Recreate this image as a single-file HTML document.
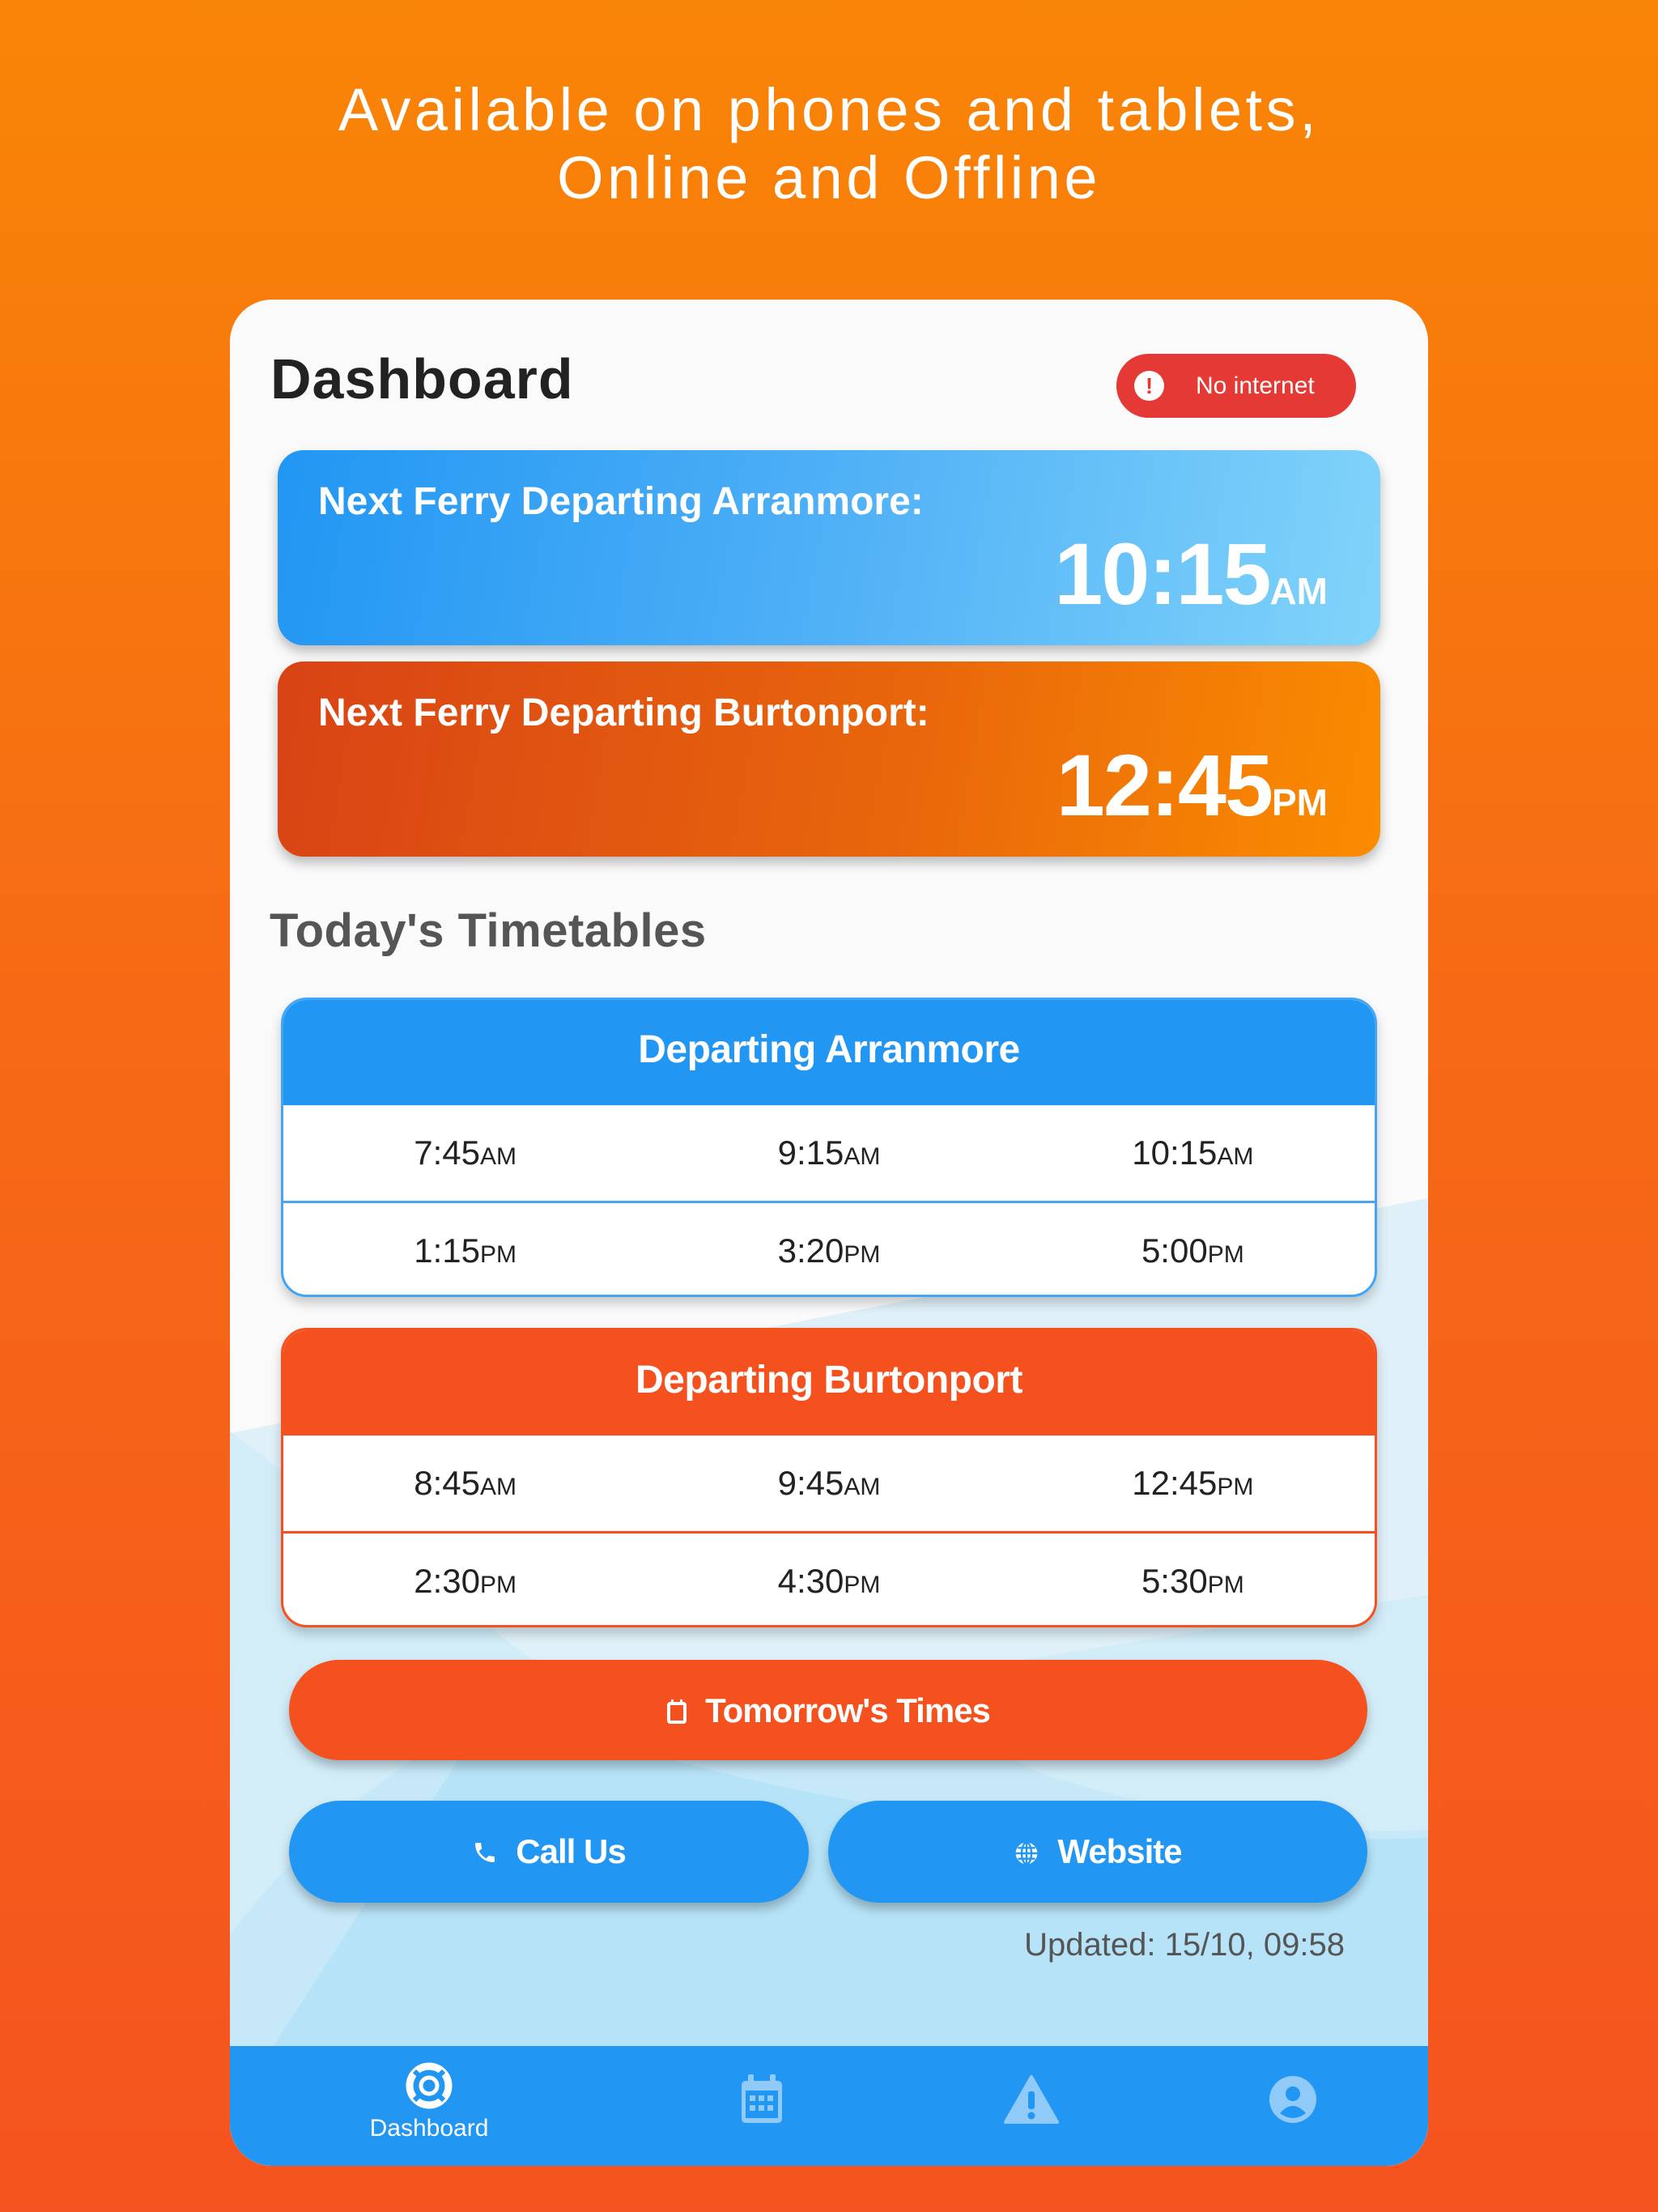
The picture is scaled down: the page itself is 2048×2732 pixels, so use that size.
<!DOCTYPE html>
<html><head><meta charset="utf-8"><style>
*{margin:0;padding:0;box-sizing:border-box}
body{width:2048px;height:2732px;position:relative;overflow:hidden;background:linear-gradient(180deg,#f98506 0%,#f66a15 45%,#f5531f 100%);font-family:"Liberation Sans",sans-serif}
.a{position:absolute}
.hd{left:0;width:2048px;text-align:center;color:#fff;font-size:74px;line-height:84px;letter-spacing:4.5px}
.card{left:284px;top:370px;width:1480px;height:2305px;border-radius:52px;background:#fafafa;overflow:hidden}
.b{font-weight:bold}
.nf{left:343px;width:1362px;height:241px;border-radius:32px;box-shadow:0 8px 14px rgba(0,0,0,.25);color:#fff}
.nf .t{position:absolute;left:50px;top:36px;font-size:48px;font-weight:bold;letter-spacing:0px}
.nf .tm{position:absolute;right:65px;top:90px;font-size:108px;font-weight:bold;letter-spacing:-2px}
.nf .tm span{font-size:46px;letter-spacing:0}
.tb{left:347px;width:1354px;height:370px;border-radius:32px;background:#fff;overflow:hidden;box-shadow:0 8px 14px rgba(0,0,0,.2)}
.tb .h{height:133px;color:#fff;font-size:48px;font-weight:bold;text-align:center;line-height:130px;letter-spacing:-0.5px}
.row{height:118px;display:flex}
.row div{flex:1;text-align:center;line-height:118px;font-size:42px;color:#222}
.row div span{font-size:30px}
.btn{border-radius:64px;color:#fff;font-weight:bold;font-size:42px;text-align:center;line-height:126px;box-shadow:0 8px 12px rgba(0,0,0,.25);letter-spacing:-1px}
</style></head><body>
<div class="a hd" style="top:94px">Available on phones and tablets,</div>
<div class="a hd" style="top:178px">Online and Offline</div>

<div class="a card">
<svg width="1480" height="2305" style="position:absolute;left:0;top:0">
<polygon points="0,1400 1480,1110 1480,2305 0,2305" fill="#dff0f8"/>
<polygon points="0,1398 480,1760 1480,1600 1480,2305 0,2305" fill="#d2ecf8"/>
<path d="M0,2020 Q400,1500 1000,1820 Q1250,1900 1480,1890 L1480,2305 L0,2305Z" fill="#c6e8f8"/>
<path d="M0,2240 L330,1730 Q800,1920 1480,1900 L1480,2305 L0,2305Z" fill="#b6e3f8"/>
<rect x="0" y="2157" width="1480" height="148" fill="#2196f3"/>
</svg>
</div>

<div class="a b" style="left:334px;top:428px;font-size:70px;color:#222;letter-spacing:1px">Dashboard</div>
<div class="a" style="left:1379px;top:437px;width:296px;height:79px;border-radius:40px;background:#e53935;color:#fff;font-size:30px;line-height:79px">
<div class="a" style="left:22px;top:21px;width:37px;height:37px;border-radius:50%;background:#fff;color:#e53935;font-weight:bold;text-align:center;line-height:37px;font-size:28px">!</div>
<span style="position:absolute;left:98px">No internet</span></div>

<div class="a nf" style="top:556px;background:linear-gradient(100deg,#2196f3 0%,#4fb0f6 50%,#81d4fa 100%)"><div class="t">Next Ferry Departing Arranmore:</div><div class="tm">10:15<span>AM</span></div></div>
<div class="a nf" style="top:817px;background:linear-gradient(100deg,#d84315 0%,#e8650c 55%,#fb8c00 100%)"><div class="t">Next Ferry Departing Burtonport:</div><div class="tm">12:45<span>PM</span></div></div>

<div class="a b" style="left:333px;top:1116px;font-size:58px;color:#555;letter-spacing:0.5px">Today's Timetables</div>

<div class="a tb" style="top:1232px;border:3px solid #42a5f5">
<div class="h" style="background:#2196f3;margin:-3px -3px 0">Departing Arranmore</div>
<div class="row"><div>7:45<span>AM</span></div><div>9:15<span>AM</span></div><div>10:15<span>AM</span></div></div>
<div style="height:3px;background:#42a5f5"></div>
<div class="row"><div>1:15<span>PM</span></div><div>3:20<span>PM</span></div><div>5:00<span>PM</span></div></div>
</div>
<div class="a tb" style="top:1640px;border:3px solid #f4511e">
<div class="h" style="background:#f4511e;margin:-3px -3px 0">Departing Burtonport</div>
<div class="row"><div>8:45<span>AM</span></div><div>9:45<span>AM</span></div><div>12:45<span>PM</span></div></div>
<div style="height:3px;background:#f4511e"></div>
<div class="row"><div>2:30<span>PM</span></div><div>4:30<span>PM</span></div><div>5:30<span>PM</span></div></div>
</div>

<div class="a btn" style="left:357px;top:2050px;width:1332px;height:124px;background:#f4511e">
<svg width="26" height="32" viewBox="0 0 26 32" style="vertical-align:-3px;margin-right:22px"><rect x="3" y="6" width="20" height="23" rx="2" fill="none" stroke="#fff" stroke-width="4"/><rect x="6" y="1" width="3" height="7" fill="#fff"/><rect x="17" y="1" width="3" height="7" fill="#fff"/></svg>Tomorrow's Times</div>
<div class="a btn" style="left:357px;top:2224px;width:642px;height:126px;background:#2196f3">
<svg width="32" height="34" viewBox="0 0 24 24" style="vertical-align:-4px;margin-right:22px"><path fill="#fff" d="M6.6 10.8c1.4 2.8 3.8 5.1 6.6 6.6l2.2-2.2c.3-.3.7-.4 1-.2 1.1.4 2.3.6 3.6.6.6 0 1 .4 1 1V20c0 .6-.4 1-1 1C10.6 21 3 13.4 3 4c0-.6.4-1 1-1h3.5c.6 0 1 .4 1 1 0 1.3.2 2.5.6 3.6.1.3 0 .7-.2 1z"/></svg>Call Us</div>
<div class="a btn" style="left:1023px;top:2224px;width:666px;height:126px;background:#2196f3">
<svg width="32" height="32" viewBox="0 0 24 24" style="vertical-align:-4px;margin-right:22px"><circle cx="12" cy="12" r="10" fill="#fff"/><path d="M2 12h20M12 2v20M4 7h16M4 17h16" stroke="#2196f3" stroke-width="1.8" fill="none"/><ellipse cx="12" cy="12" rx="4.5" ry="10" fill="none" stroke="#2196f3" stroke-width="1.8"/></svg>Website</div>

<div class="a" style="right:387px;top:2380px;font-size:40px;color:#555">Updated: 15/10, 09:58</div>

<svg class="a" style="left:501px;top:2547px" width="58" height="58" viewBox="0 0 58 58"><circle cx="29" cy="29" r="24" fill="none" stroke="#fff" stroke-width="9"/><circle cx="29" cy="29" r="10" fill="none" stroke="#fff" stroke-width="5"/><g stroke="#2196f3" stroke-width="6"><line x1="11" y1="11" x2="20" y2="20"/><line x1="47" y1="11" x2="38" y2="20"/><line x1="11" y1="47" x2="20" y2="38"/><line x1="47" y1="47" x2="38" y2="38"/></g></svg>
<div class="a" style="left:430px;width:200px;top:2612px;text-align:center;color:#fff;font-size:30px">Dashboard</div>
<svg class="a" style="left:914px;top:2562px" width="54" height="62" viewBox="0 0 54 62"><rect x="2" y="8" width="50" height="52" rx="5" fill="#90caf9"/><rect x="10" y="0" width="7" height="14" rx="2" fill="#90caf9"/><rect x="37" y="0" width="7" height="14" rx="2" fill="#90caf9"/><rect x="7" y="20" width="40" height="34" fill="#2196f3"/><g fill="#90caf9"><rect x="12" y="26" width="7" height="7"/><rect x="23" y="26" width="7" height="7"/><rect x="34" y="26" width="7" height="7"/><rect x="12" y="38" width="7" height="7"/><rect x="23" y="38" width="7" height="7"/><rect x="34" y="38" width="7" height="7"/></g></svg>
<svg class="a" style="left:1240px;top:2563px" width="68" height="60" viewBox="0 0 68 60"><path d="M34 2 L66 58 H2 Z" fill="#90caf9" stroke="#90caf9" stroke-width="4" stroke-linejoin="round"/><rect x="30" y="20" width="8" height="22" rx="3" fill="#2196f3"/><circle cx="34" cy="50" r="4.5" fill="#2196f3"/></svg>
<svg class="a" style="left:1568px;top:2564px" width="58" height="58" viewBox="0 0 58 58"><circle cx="29" cy="29" r="29" fill="#90caf9"/><circle cx="29" cy="22" r="9" fill="#2196f3"/><path d="M13 46 Q29 28 45 46 Q29 58 13 46Z" fill="#2196f3"/></svg>
</body></html>
